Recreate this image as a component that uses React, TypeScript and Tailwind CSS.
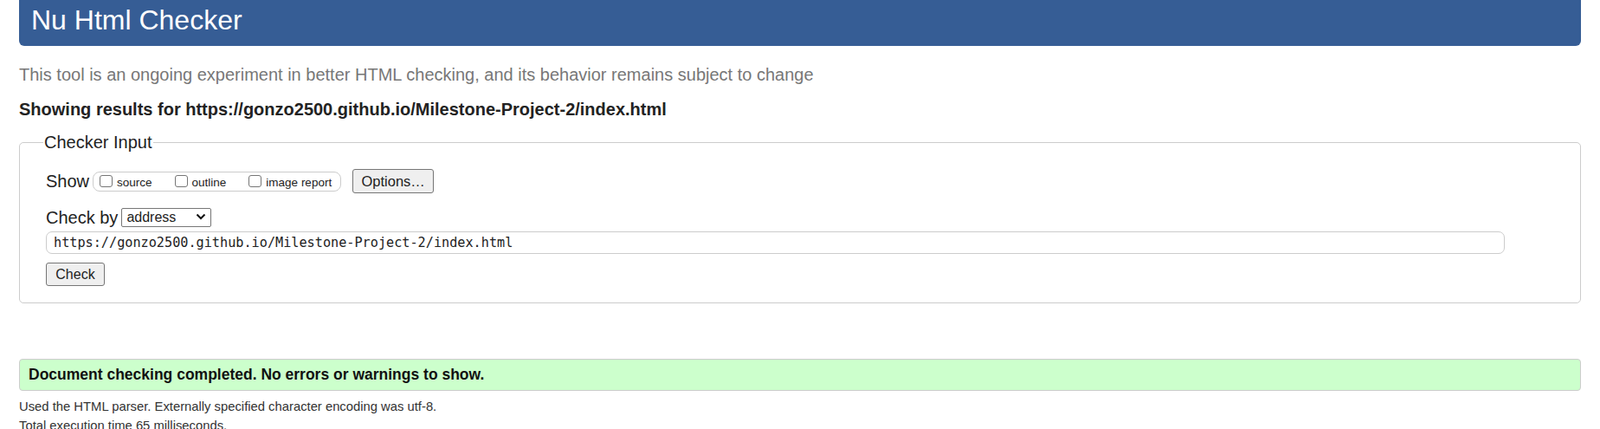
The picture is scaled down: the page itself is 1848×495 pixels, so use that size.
import React from "react";

const sans = "font-['Liberation_Sans',Arial,sans-serif]";

function Box({ label }: { label: string }) {
  return (
    <label className="flex items-center">
      <input
        type="checkbox"
        className="appearance-none w-[15px] h-[14px] border border-[#767676] rounded-[3px] bg-white mr-[5px]"
      />
      <span className="text-[13.5px] leading-[16px] pt-[3px] text-[#222]">{label}</span>
    </label>
  );
}

export default function App() {
  return (
    <div className={`${sans} w-[1848px] h-[495px] overflow-hidden bg-white text-[#222] px-[22px]`}>
      {/* Header */}
      <div className="h-[53px] bg-[#365d95] rounded-b-[6px] pl-[14px] pt-[5px]">
        <h1 className="text-[32px] leading-[36px] text-white">Nu Html Checker</h1>
      </div>

      <p className="mt-[21px] text-[20px] leading-[24px] text-[#777]">
        This tool is an ongoing experiment in better HTML checking, and its behavior remains subject to change
      </p>

      <p className="mt-[17px] text-[20px] leading-[22px] font-bold text-[#222]">
        Showing results for https://gonzo2500.github.io/Milestone-Project-2/index.html
      </p>

      {/* Checker input */}
      <fieldset className="mt-[15px] border border-[#ccc] rounded-[5px] pl-[30px] pr-[30px] pb-[19px]">
        <legend className="ml-[-3px] px-[1px] text-[20px] leading-[24px] text-[#222]">Checker Input</legend>

        <div className="mt-[19px] flex items-center h-[28px]">
          <span className="text-[20px] leading-[24px] mr-[4px]">Show</span>
          <div className="flex items-center h-[23px] border border-[#ccc] rounded-[8px] pl-[7px] pr-[10px] gap-[26px]">
            <Box label="source" />
            <Box label="outline" />
            <Box label="image report" />
          </div>
          <button className="ml-[13px] w-[94px] h-[28px] border border-[#767676] rounded-[3px] bg-[#efefef] text-[16.5px] text-[#222]">
            Options…
          </button>
        </div>

        <div className="mt-[16px] flex items-center h-[24px]">
          <span className="text-[20px] leading-[24px] mr-[4px]">Check by</span>
          <div className="relative">
            <select className="appearance-none w-[104px] h-[22px] border border-[#767676] rounded-[2px] bg-white text-[16px] leading-[20px] pl-[5px] text-[#222]">
              <option>address</option>
            </select>
            <svg
              className="absolute right-[6px] top-[6px] pointer-events-none"
              width="12"
              height="10"
              viewBox="0 0 12 10"
            >
              <path d="M1.5 2.5 L6 7 L10.5 2.5" fill="none" stroke="#111" strokeWidth="2" />
            </svg>
          </div>
        </div>

        <input
          readOnly
          value="https://gonzo2500.github.io/Milestone-Project-2/index.html"
          className="mt-[4px] block w-[1685px] h-[26px] border border-[#ccc] rounded-[7px] pl-[8px] font-['DejaVu_Sans_Mono',monospace] text-[15.2px] text-[#222]"
        />

        <button className="mt-[10px] block w-[68px] h-[27px] border border-[#767676] rounded-[3px] bg-[#efefef] text-[16px] text-[#222]">
          Check
        </button>
      </fieldset>

      {/* Result */}
      <div className="mt-[64px] h-[37px] flex items-center bg-[#ccffcc] border border-[#ccc] rounded-[4px] pl-[10px]">
        <p className="text-[17.5px] font-bold text-[#111]">
          Document checking completed. No errors or warnings to show.
        </p>
      </div>

      <p className="mt-[7px] text-[14.8px] leading-[22px] text-[#333]">
        Used the HTML parser. Externally specified character encoding was utf-8.
      </p>
      <p className="text-[14.8px] leading-[22px] text-[#333]">Total execution time 65 milliseconds.</p>
    </div>
  );
}
